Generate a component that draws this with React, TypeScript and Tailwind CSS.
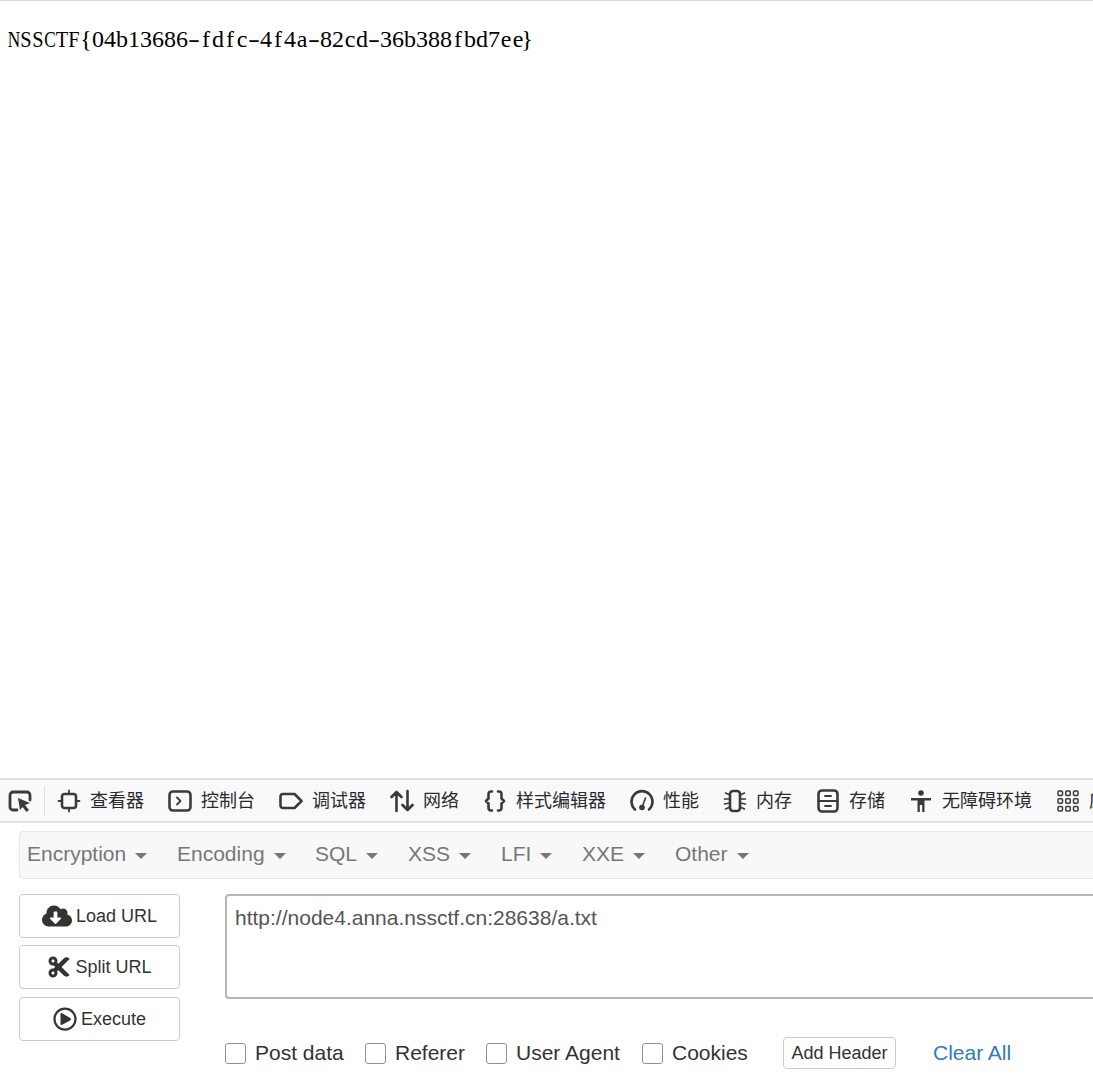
import { FaCloudDownloadAlt, FaCut, FaRegPlayCircle } from "react-icons/fa";
import type { ReactNode } from "react";

const flag = "NSSCTF{04b13686-fdfc-4f4a-82cd-36b388fbd7ee}";
const menus = [
  { label: "Encryption", width: "w-[150px]" },
  { label: "Encoding", width: "w-[138px]" },
  { label: "SQL", width: "w-[93px]" },
  { label: "XSS", width: "w-[93px]" },
  { label: "LFI", width: "w-[81px]" },
  { label: "XXE", width: "w-[93px]" },
  { label: "Other", width: "w-[100px]" },
];

function flagCharClass(c: string) {
  if (c === "-") return "scale-x-150";
  if (c === "N" || c === "C") return "scale-x-[0.72]";
  if (c === "S" || c === "T" || c === "F") return "scale-x-[0.85]";
  if (c === "}") return "-translate-x-[3px]";
  return "";
}

function Icon({ children }: { children: ReactNode }) {
  return (
    <svg viewBox="0 0 24 24" fill="none" stroke="#3a3a3c" strokeWidth="2.6" strokeLinecap="round" strokeLinejoin="round" className="w-6 h-6 shrink-0">
      {children}
    </svg>
  );
}

const tabs: { label: string; icon: ReactNode }[] = [
  {
    label: "查看器",
    icon: (
      <>
        <rect x="5" y="5" width="14" height="14" rx="2.5" />
        <path d="M12 1.5v3.5M12 19v3.5M1.5 12H5M19 12h3.5" strokeWidth="1.8" />
      </>
    ),
  },
  {
    label: "控制台",
    icon: (
      <>
        <rect x="1.5" y="2.5" width="21" height="19" rx="3.5" />
        <path d="M9 8.5l3.5 3.5L9 15.5" strokeWidth="1.8" />
      </>
    ),
  },
  {
    label: "调试器",
    icon: <path d="M4 5h11.5l7 7-7 7H4a2.5 2.5 0 0 1-2.5-2.5v-9A2.5 2.5 0 0 1 4 5z" />,
  },
  {
    label: "网络",
    icon: <path d="M6.5 22V3M1.5 8l5-5 5 5M17.5 2v19M12.5 16l5 5 5-5" />,
  },
  {
    label: "样式编辑器",
    icon: (
      <path d="M9 2.500H8A2.500 2.500 0 0 0 5.500 5v4.500L3 12l2.500 2.500V19A2.500 2.500 0 0 0 8 21.500h1M15 2.500h1A2.500 2.500 0 0 1 18.500 5v4.500L21 12l-2.500 2.500V19a2.500 2.500 0 0 1-2.500 2.500h-1" />
    ),
  },
  {
    label: "性能",
    icon: (
      <>
        <path d="M5 20.500A10.500 10.500 0 1 1 19 20.500" />
        <path d="M15.500 9l-3 8" strokeWidth="1.6" />
        <circle cx="12" cy="18.500" r="2.800" fill="#3a3a3c" stroke="none" />
      </>
    ),
  },
  {
    label: "内存",
    icon: (
      <>
        <rect x="7" y="2" width="10" height="20" rx="3" />
        <path d="M7 6L2.500 4M7 10H1.500M7 14l-5.500 1M7 18l-4.500 2M17 6l4.500-2M17 10h5.500M17 14l5.500 1M17 18l4.500 2" strokeWidth="1.600" />
      </>
    ),
  },
  {
    label: "存储",
    icon: (
      <>
        <rect x="2.500" y="1.500" width="19" height="21" rx="3.500" />
        <path d="M2.500 12h19M9 7h6M9 17h6" strokeWidth="1.800" />
      </>
    ),
  },
  {
    label: "无障碍环境",
    icon: (
      <>
        <circle cx="12" cy="4" r="2.800" fill="#3a3a3c" stroke="none" />
        <path d="M2 9h20v2.500h-6.500V23h-2.300v-7h-2.400v7H8.500V11.500H2z" fill="#3a3a3c" stroke="none" />
      </>
    ),
  },
  {
    label: "应用程序",
    icon: (
      <g strokeWidth="1.500">
        <rect x="2" y="2" width="4.500" height="4.500" rx="1" />
        <rect x="9.750" y="2" width="4.500" height="4.500" rx="1" />
        <rect x="17.500" y="2" width="4.500" height="4.500" rx="1" />
        <rect x="2" y="9.750" width="4.500" height="4.500" rx="1" />
        <rect x="9.750" y="9.750" width="4.500" height="4.500" rx="1" />
        <rect x="17.500" y="9.750" width="4.500" height="4.500" rx="1" />
        <rect x="2" y="17.500" width="4.500" height="4.500" rx="1" />
        <rect x="9.750" y="17.500" width="4.500" height="4.500" rx="1" />
        <rect x="17.500" y="17.500" width="4.500" height="4.500" rx="1" />
      </g>
    ),
  },
];

function Check({ label, width }: { label: string; width: string }) {
  return (
    <label className={`flex items-center gap-[9px] shrink-0 ${width}`}>
      <span className="w-[21px] h-[21px] rounded-[3px] border border-[#8f8f9d] bg-white shrink-0" />
      <span className="text-[21px] text-[#333]">{label}</span>
    </label>
  );
}

function SideButton({ icon, label, className }: { icon: ReactNode; label: string; className?: string }) {
  return (
    <button type="button" className={`h-[44px] w-full flex items-center justify-center gap-1 rounded-[4px] border border-[#ccc] bg-white text-[18px] text-[#333] ${className ?? ""}`}>
      {icon}
      {label}
    </button>
  );
}

export default function App() {
  return (
    <div className="w-[1093px] h-[1076px] overflow-hidden flex flex-col bg-white font-['Liberation_Sans','Noto_Sans_CJK_SC',sans-serif]">
      <div className="h-[778px] shrink-0 border-t border-[#ddd] pt-[23px] pl-2">
        <div className="flex h-[30px] items-center text-[24px] text-black font-['Liberation_Serif',serif]">
          {flag.split("").map((c, i) => (
            <span key={i} className={`w-3 flex justify-center ${flagCharClass(c)}`}>{c}</span>
          ))}
        </div>
      </div>

      <div className="h-[45px] shrink-0 flex items-center border-y-2 border-[#e0e0e2] bg-[#f9f9fa] overflow-hidden whitespace-nowrap">
        <div className="pl-2 pr-3 border-r border-[#e0e0e2] h-[30px] flex items-center">
          <svg viewBox="0 0 24 24" fill="none" className="w-6 h-6 shrink-0">
            <path d="M9 21H5a3 3 0 0 1-3-3V6a3 3 0 0 1 3-3h14a3 3 0 0 1 3 3v5" stroke="#3a3a3c" strokeWidth="2.800" strokeLinecap="round" />
            <path d="M10 9l12 5-5 2 4 5-2.500 2-4-5-2.500 3z" fill="#3a3a3c" />
          </svg>
        </div>
        <div className="flex items-center pl-3">
          {tabs.map((t) => (
            <div key={t.label} className="flex items-center gap-[9px] pr-6 text-[18px] text-[#2a2a2e] shrink-0">
              <Icon>{t.icon}</Icon>
              <span className="mt-0.5">{t.label}</span>
            </div>
          ))}
        </div>
      </div>

      <div className="flex-1 pl-[19px] pt-2 overflow-hidden">
        <div className="h-[48px] w-[1100px] flex items-center pl-[7px] rounded-[4px] border border-[#e7e7e7] bg-[#f8f8f8] text-[21px] text-[#777]">
          {menus.map((m) => (
            <div key={m.label} className={`flex items-center gap-[9px] shrink-0 ${m.width}`}>
              <span className="-mt-0.5">{m.label}</span>
              <span className="border-x-[6px] border-x-transparent border-t-[6px] border-t-[#777] w-0 h-0 mt-0.5" />
            </div>
          ))}
        </div>

        <div className="flex mt-[15px] gap-[45px]">
          <div className="w-[161px] shrink-0 flex flex-col gap-[7px]">
            <SideButton icon={<FaCloudDownloadAlt className="w-[30px] h-[30px] text-[#333]" />} label="Load URL" />
            <SideButton icon={<FaCut className="w-6 h-6 text-[#333]" />} label="Split URL" />
            <SideButton className="mt-px" icon={<FaRegPlayCircle className="w-6 h-6 text-[#333]" />} label="Execute" />
          </div>

          <div className="w-[900px] shrink-0">
            <div className="h-[105px] rounded-[4px] border-2 border-[#b5b5b5] px-2 py-2 text-[21px] leading-[28px] text-[#555]">
              http://node4.anna.nssctf.cn:28638/a.txt
            </div>
            <div className="flex items-center mt-[38px] h-[32px]">
              <Check label="Post data" width="w-[140px]" />
              <Check label="Referer" width="w-[121px]" />
              <Check label="User Agent" width="w-[156px]" />
              <Check label="Cookies" width="w-[141px]" />
              <button type="button" className="h-[32px] w-[113px] rounded-[4px] border border-[#ccc] bg-white text-[18px] text-[#333] shrink-0">Add Header</button>
              <span className="ml-[37px] text-[21px] text-[#337ab7]">Clear All</span>
            </div>
          </div>
        </div>
      </div>
    </div>
  );
}
